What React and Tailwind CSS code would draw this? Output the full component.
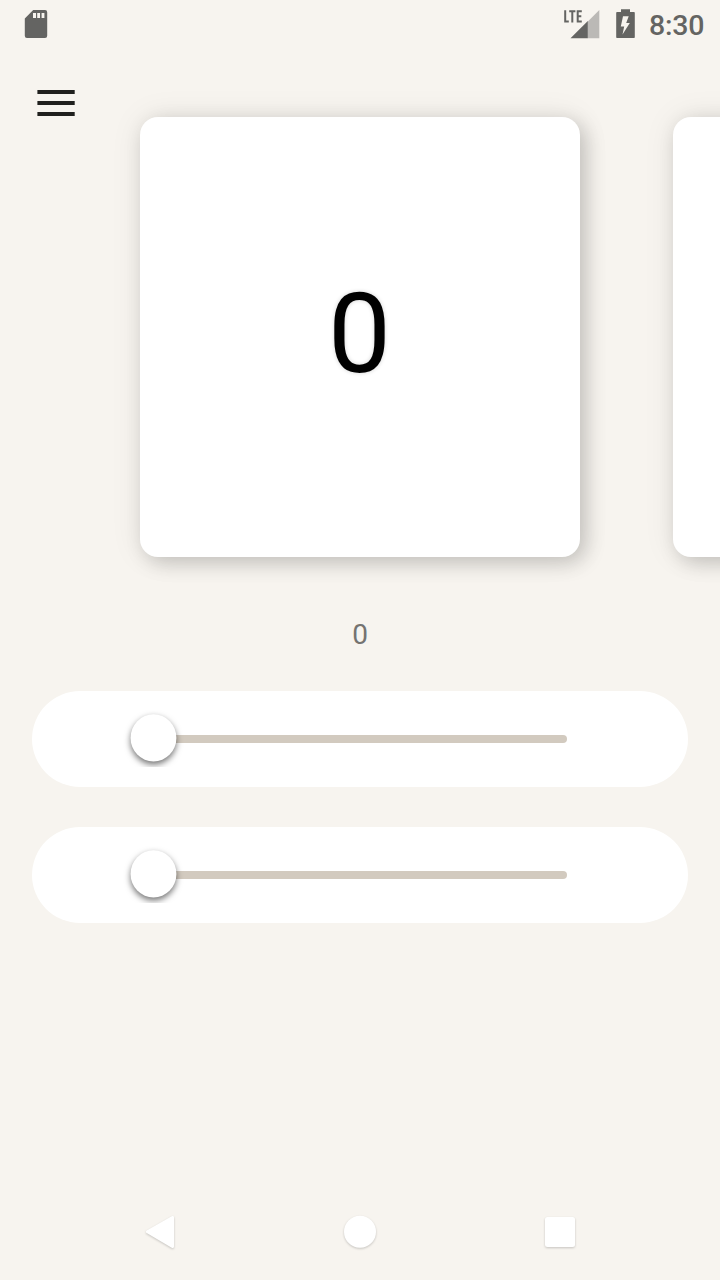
const CARD_SHADOW =
  'shrink-0 w-[440px] h-[440px] rounded-[18px] bg-white shadow-[6px_6px_20px_0px_rgba(0,0,0,0.18),0_0_32px_rgba(0,0,0,0.08)]';

function StatusBar() {
  return (
    <header className="flex h-12 shrink-0 items-start text-[#646462]">
      <svg className="mt-[10px] ml-6 h-7 w-6" viewBox="0 0 24 28">
        <path
          fill="currentColor"
          fillRule="evenodd"
          d="M9.2 0H21a2.2 2.2 0 0 1 2.2 2.2v23.6A2.2 2.2 0 0 1 21 28H3a2.2 2.2 0 0 1-2.2-2.2V8.4z"
        />
        <path fill="#f7f4ef" d="M9 3h3v5H9zM13.2 3h2.8v5h-2.8zM17.6 3h2.8v5h-2.8z" />
      </svg>
      <div className="flex-1" />
      <svg className="mt-2 h-8 w-10" viewBox="0 0 40 32">
        <path fill="#bbb9b6" d="M27.8 13.5 39.3 2v28.2H27.8z" />
        <path fill="currentColor" d="M10.5 30.2 27.8 12.9v17.3z" />
        <path
          fill="none"
          stroke="currentColor"
          strokeWidth="2"
          d="M5.2 2.2v11.3h3.6M9.2 3.2h6.2M12.3 3.2v11.3M21.8 3.2h-4.1v10.3h4.1M17.7 8.2h3.6"
        />
      </svg>
      <svg className="mt-2 ml-4 h-8 w-[19px]" viewBox="0 0 19 32">
        <path
          fill="currentColor"
          fillRule="evenodd"
          d="M5 1.2h9v2.9h4q.8 0 .8.8v24.3q0 .8-.8.8H1q-.8 0-.8-.8V4.9q0-.8.8-.8h4zM7 8.3 4.8 18.6h3.4L6.5 26.6 13.8 14.9h-3.6L12.7 8.3z"
        />
      </svg>
      <span className="mt-[10px] mr-4 ml-[14px] w-[55px] whitespace-nowrap text-[28.5px] leading-8 font-medium tracking-[-0.2px]">
        8:30
      </span>
    </header>
  );
}

function Slider() {
  return (
    <div className="flex h-24 items-center rounded-full bg-white pl-[90px]">
      <div className="flex h-[60px] w-[445px] items-center">
        <div className="z-10 -mr-[30px] h-[60px] w-[62px] shrink-0">
          <div className="h-[58px] overflow-hidden pt-[5px] pl-2">
            <svg className="h-[55px] w-[54px] overflow-visible" viewBox="0 0 54 55">
              <ellipse
                cx="23.5"
                cy="23.9"
                rx="22.9"
                ry="23.6"
                fill="white"
                className="drop-shadow-[0_3px_3px_rgba(0,0,0,0.55)]"
              />
            </svg>
          </div>
        </div>
        <div className="h-2 flex-1 rounded-r-[4px] bg-[#d2cabf]" />
      </div>
    </div>
  );
}

export default function App() {
  return (
    <div className="flex h-[1280px] w-[720px] flex-col overflow-hidden bg-[#f7f4ef] font-[Roboto,sans-serif]">
      <StatusBar />
      <section className="flex h-[509px] shrink-0">
        <div className="w-[140px] shrink-0 pt-[42px] pl-9">
          <button aria-label="Menu" className="block">
            <svg className="h-[26px] w-10" viewBox="0 0 40 26">
              <path fill="#20201e" d="M1.4 0h37.3v4H1.4zM1.4 11h37.3v4H1.4zM1.4 22h37.3v4H1.4z" />
            </svg>
          </button>
        </div>
        <div className="flex gap-[93px] pt-[69px]">
          <div className={CARD_SHADOW}>
            <div className="flex h-[434px] w-[439px] items-center justify-center text-[112px] leading-none text-black [text-shadow:0_0_4px_rgba(0,0,0,0.18)]">
              0
            </div>
          </div>
          <div className={CARD_SHADOW} />
        </div>
      </section>
      <p className="mt-[62px] h-[72px] shrink-0 text-center text-[28px] leading-8 text-[#747371]">0</p>
      <main className="flex flex-col gap-10 px-8">
        <Slider />
        <Slider />
      </main>
      <nav className="mt-auto flex h-24 shrink-0 items-center justify-center gap-[136px]">
        <svg className="h-16 w-16 drop-shadow-[0_1.5px_0.8px_rgba(0,0,0,0.2)]" viewBox="0 0 64 64">
          <path
            fill="white"
            stroke="white"
            strokeWidth="3"
            strokeLinejoin="round"
            d="M19.5 31.8 44.5 17.5V46.5z"
          />
        </svg>
        <svg className="h-16 w-16 drop-shadow-[0_1.5px_0.8px_rgba(0,0,0,0.2)]" viewBox="0 0 64 64">
          <circle cx="32" cy="31.7" r="16" fill="white" />
        </svg>
        <svg className="h-16 w-16 drop-shadow-[0_1.5px_0.8px_rgba(0,0,0,0.2)]" viewBox="0 0 64 64">
          <rect x="17" y="17" width="30" height="30" rx="2.5" fill="white" />
        </svg>
      </nav>
    </div>
  );
}
